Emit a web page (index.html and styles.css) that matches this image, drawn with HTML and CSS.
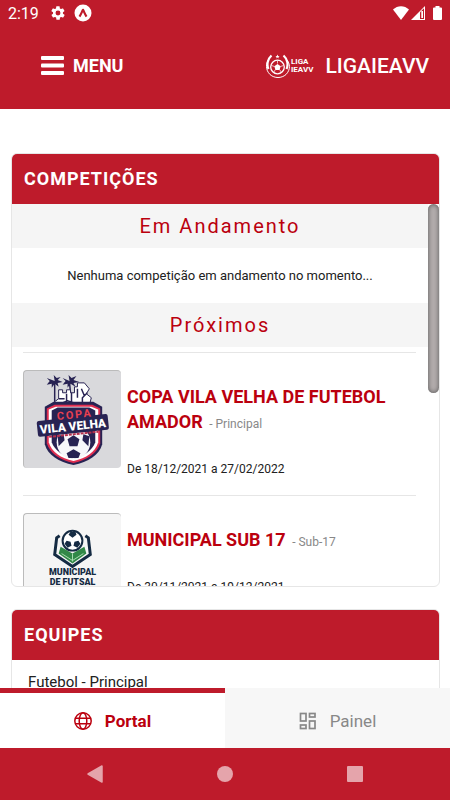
FILE: index.html
```html
<!DOCTYPE html>
<html lang="pt-BR">
<head>
  <meta charset="UTF-8">
  <meta name="viewport" content="width=device-width, initial-scale=1.0">
  <title>LIGAIEAVV</title>
  <link rel="stylesheet" href="styles.css">
</head>
<body>
  <header class="top">
    <div class="status-bar">
      <span class="clock">2:19</span>
      <svg class="status-gear" viewBox="0 0 24 24" width="16" height="16" fill="currentColor" aria-hidden="true">
        <path fill-rule="evenodd" d="M19.4 13a7.500 7.500 0 0 0 0-2l2.100-1.600a.5.5 0 0 0 .1-.7l-2-3.400a.5.5 0 0 0-.6-.2l-2.500 1a7 7 0 0 0-1.700-1l-.4-2.700a.5.5 0 0 0-.5-.4h-4a.5.5 0 0 0-.5.400l-.4 2.700a7 7 0 0 0-1.700 1l-2.500-1a.5.5 0 0 0-.6.2l-2 3.400a.5.5 0 0 0 .1.7L4.600 11a7.500 7.500 0 0 0 0 2l-2.100 1.600a.5.5 0 0 0-.1.700l2 3.400c.1.200.4.300.6.200l2.500-1a7 7 0 0 0 1.700 1l.4 2.700c0 .2.200.4.500.4h4c.3 0 .5-.2.500-.4l.4-2.700a7 7 0 0 0 1.700-1l2.500 1c.2.100.5 0 .6-.2l2-3.400a.5.500 0 0 0-.1-.7zM12 8.300a3.700 3.700 0 1 0 0 7.400 3.700 3.700 0 0 0 0-7.400z"/>
      </svg>
      <svg viewBox="0 0 18 18" width="18" height="18" aria-hidden="true">
        <circle cx="9" cy="9" r="8.500" fill="#fff"/>
        <path d="M5.500 12.600C7 10.400 7.800 8 9 5.800c1.200 2.200 2 4.600 3.500 6.800" fill="none" stroke="#be1b2b" stroke-width="2.200" stroke-linejoin="round"/>
      </svg>
      <div class="status-right">
        <svg viewBox="0 0 16 14" width="16" height="14" fill="#fff" aria-hidden="true"><path d="M0 3.500C4.500-1 11.500-1 16 3.500L8 14z"/></svg>
        <svg viewBox="0 0 14 14" width="14" height="14" aria-hidden="true">
          <path d="M14 0v14H0z" fill="#fff"/>
          <path d="M9 6.300l4-4V13H9z" fill="#be1b2b"/>
          <path d="M10.300 5h1.700v7h-1.700z" fill="#fff"/>
        </svg>
        <svg class="battery" viewBox="0 0 9 14" width="9" height="14" fill="#fff" aria-hidden="true"><path d="M2.500 0h4v1.500H8a1 1 0 0 1 1 1V13a1 1 0 0 1-1 1H1a1 1 0 0 1-1-1V2.500a1 1 0 0 1 1-1h1.500z"/></svg>
      </div>
    </div>
    <div class="navbar">
      <button class="menu-button" type="button">
        <svg viewBox="0 0 23 19" width="23" height="19" fill="#fff" aria-hidden="true">
          <rect width="23" height="4" rx="1"/><rect y="7.500" width="23" height="4" rx="1"/><rect y="15" width="23" height="4" rx="1"/>
        </svg>
        MENU
      </button>
      <a class="brand" href="#">
        <svg viewBox="0 0 50 26" width="50" height="26" aria-hidden="true">
          <g fill="none" stroke="#fff">
            <path d="M4 5C-1 10-.5 17 4 21.500c4.500 4 11.500 4 16 0C24.500 17 25 10 19 5" stroke-width="1"/>
            <path d="M5.500 2.500C1.500 6 .5 12 2.500 16M17.500 2.500C21.500 6 22.500 12 20.500 16" stroke-width="2.200"/>
            <circle cx="11.500" cy="14" r="6.800" stroke-width="1.300"/>
            <path d="M11.500 7.500v3M17.500 12.500l-3 1M15.500 19.500l-2-3M7.500 19.500l2-3M5.500 12.500l3 1" stroke-width=".7"/>
          </g>
          <path d="M11.500 11l3.200 2.300-1.200 3.700h-4l-1.200-3.700zM11.500 1.500l.6 1.400 1.500.1-1.200 1 .4 1.400-1.300-.8-1.300.8.4-1.400-1.200-1 1.500-.1z" fill="#fff"/>
          <text class="brand-text" x="25" y="11">LIGA</text>
          <text class="brand-text" x="25" y="19">IEAVV</text>
        </svg>
        <span>LIGAIEAVV</span>
      </a>
    </div>
  </header>

  <main class="content">
    <section class="card">
      <h2 class="card-title">COMPETIÇÕES</h2>
      <div class="scroll-panel">
        <h3 class="group-title">Em Andamento</h3>
        <p class="empty">Nenhuma competição em andamento no momento...</p>
        <h3 class="group-title">Próximos</h3>
        <div class="competitions">
          <article class="competition">
            <svg class="thumb thumb-copa" viewBox="0 0 98 98" width="98" height="98" role="img" aria-label="Copa Vila Velha">
              <path d="M31 12v22M46 12l1 10" stroke="#282353" stroke-width="1.500" fill="none"/>
              <g fill="#282353">
                <path d="M31 10l-1-6 3 3 4-1-3 3 5 2-5 1 1 4-4-3-3 4v-4l-5 1 3-4-3-3z"/>
                <path d="M46 10l-1-6 3 3 5-2-3 4 6 2-6 1 2 4-5-3-3 4v-4l-5 1 3-4-3-3z"/>
              </g>
              <path d="M27 34l8-6v-9h4v3h4v-3h4v3h4v-6h3v-4h7l5 6-3 5 5 4-2 8H27z" fill="#fff" stroke="#282353"/>
              <path d="M35 28h6M43 23v7M48 22v9M54 18v9M58 18l3 7M64 22l-5 5v6M37 33l7-3 9 3" fill="none" stroke="#282353" stroke-width="1.500"/>
              <path d="M21 36l9-5h40l9 5v38c-3 11-14 18-29 21-15-3-26-10-29-21z" fill="#282353"/>
              <path d="M23 38l8-4h38l8 4v35c-3 10-13 17-27 20-14-3-24-10-27-20z" fill="#e02e50"/>
              <path d="M25 39l7-3h36l7 3v33c-3 10-12 16-25 19-13-3-22-9-25-19z" fill="#fff"/>
              <path d="M28 40l6-3h32l6 3v32c-3 8-11 14-22 17-11-3-19-9-22-17z" fill="#282353"/>
              <circle cx="50" cy="72" r="17" fill="#f7f7fa"/>
              <path d="M50 65l6 4-2 7h-8l-2-7zM34 66l6-2 1 6-6 6zM66 66l-6-2-1 6 6 6zM43 83l7-4 7 4-2 5H45z" fill="#282353"/>
              <g transform="rotate(-6 49 52)">
                <rect x="13" y="47" width="72" height="16" rx="2" fill="#282353"/>
                <path d="M24 64h50" stroke="#b7304d" stroke-width="2" stroke-dasharray="3 1"/>
                <text class="copa-small" x="52" y="48">COPA</text>
                <text class="copa-big" x="49" y="60">VILA VELHA</text>
              </g>
            </svg>
            <div class="competition-info">
              <h4><a href="#">COPA VILA VELHA DE FUTEBOL AMADOR</a> <small>- Principal</small></h4>
              <p>De 18/12/2021 a 27/02/2022</p>
            </div>
          </article>
          <article class="competition">
            <svg class="thumb thumb-municipal" viewBox="0 0 98 98" width="98" height="98" role="img" aria-label="Municipal de Futsal">
              <path d="M36 22l-3 2-2 17 18 12 18-12-2-17-3-2" fill="none" stroke="#152b43" stroke-width="3"/>
              <path d="M37 33l12 7 12-7 2 7-14 10-14-10z" fill="#318847"/>
              <path d="M38 40l11 7 11-7M49 40v8" fill="none" stroke="#a8ddb0"/>
              <circle cx="49" cy="27" r="10" fill="#fff" stroke="#152b43" stroke-width="2"/>
              <path d="M47 18h5l1 3-4 3-4-3zM43 27l4 1 1 4-4 2-3-4zM55 27l-4 1-1 4 4 2 3-4z" fill="#152b43"/>
              <text class="municipal-text" x="49" y="62">MUNICIPAL</text>
              <text class="municipal-text" x="49" y="72">DE FUTSAL</text>
            </svg>
            <div class="competition-info">
              <h4><a href="#">MUNICIPAL SUB 17</a> <small>- Sub-17</small></h4>
              <p>De 30/11/2021 a 19/12/2021</p>
            </div>
          </article>
        </div>
        <div class="scroll-thumb"></div>
      </div>
    </section>

    <section class="card">
      <h2 class="card-title">EQUIPES</h2>
      <a class="team" href="#">Futebol - Principal</a>
    </section>
  </main>

  <nav class="tabs">
    <a class="tab active" href="#">
      <svg viewBox="0 0 18 18" width="18" height="18" fill="none" stroke="currentColor" stroke-width="1.500" aria-hidden="true">
        <circle cx="9" cy="9" r="8.200"/><ellipse cx="9" cy="9" rx="3.800" ry="8.200"/><path d="M1.500 6.200h15M1.500 11.800h15"/>
      </svg>
      Portal
    </a>
    <a class="tab" href="#">
      <svg viewBox="0 0 18 18" width="18" height="18" fill="none" stroke="currentColor" stroke-width="1.700" aria-hidden="true">
        <rect x="1.500" y="1.500" width="5.500" height="7.500"/><rect x="10.500" y="1.500" width="5.500" height="3.500"/>
        <rect x="1.500" y="13" width="5.500" height="3.500"/><rect x="10.500" y="9" width="5.500" height="7.500"/>
      </svg>
      Painel
    </a>
  </nav>

  <div class="system-nav">
    <button type="button" aria-label="Voltar"><svg viewBox="0 0 18 18" width="18" height="18"><path d="M16 1v16L2 9z" stroke="currentColor" stroke-width="1.500" stroke-linejoin="round"/></svg></button>
    <button type="button" aria-label="Início"><svg viewBox="0 0 18 18" width="18" height="18"><circle cx="9" cy="9" r="8"/></svg></button>
    <button type="button" aria-label="Recentes"><svg viewBox="0 0 18 18" width="18" height="18"><rect x="1" y="1" width="16" height="16" rx="1"/></svg></button>
  </div>
</body>
</html>
```
FILE: styles.css
```css
:root {
  --primary: #be1b2b;
  --link: #bb000e;
  --band: #f5f5f5;
  --line: #e6e6e6;
}

* {
  box-sizing: border-box;
}

body {
  margin: 0;
  height: 100vh;
  display: flex;
  flex-direction: column;
  background: white;
  color: #212121;
  font-family: Roboto, sans-serif;
}

h2, h3, h4, p {
  margin: 0;
}

a {
  color: inherit;
  text-decoration: none;
}

button {
  padding: 0;
  border: none;
  background: none;
  color: inherit;
  font-family: inherit;
  cursor: pointer;
}

svg {
  flex-shrink: 0;
}

/* Header */
.top {
  background: var(--primary);
  color: white;
  padding-bottom: 24px;
}

.status-bar {
  display: flex;
  align-items: center;
  height: 26px;
  padding: 0 8px;
}

.clock {
  font-size: 16px;
}

.status-gear {
  margin: 0 8px 0 11px;
}

.status-right {
  display: flex;
  margin-left: auto;
  gap: 2px;
}

.battery {
  margin-left: 6px;
}

.navbar {
  display: flex;
  align-items: center;
  justify-content: space-between;
  height: 59px;
  padding: 20px 21px 0 41px;
}

.menu-button {
  display: flex;
  align-items: center;
  gap: 9px;
  font-size: 18px;
  font-weight: 700;
}

.brand {
  display: flex;
  align-items: center;
  gap: 9px;
  font-size: 21px;
  font-weight: 500;
}

.brand-text {
  fill: white;
  font-size: 8px;
  font-weight: 700;
}

/* Cards */
.content {
  flex: 1;
  min-height: 0;
  overflow: hidden;
  padding: 44px 10px 0 11px;
}

.card {
  border: 1px solid var(--line);
  border-radius: 6px;
  margin-bottom: 22px;
  overflow: hidden;
}

.card-title {
  margin: -1px -1px 0;
  padding-left: 13px;
  background: var(--primary);
  color: white;
  font-size: 18px;
  line-height: 51px;
  letter-spacing: 1px;
}

.scroll-panel {
  position: relative;
  height: 382px;
  padding-right: 11px;
  overflow: hidden;
}

.scroll-thumb {
  position: absolute;
  top: 0;
  right: 0;
  width: 11px;
  height: 189px;
  border-radius: 6px;
  background: #b3adad;
  box-shadow: inset 0 0 5px #555;
}

.group-title {
  background: var(--band);
  color: var(--link);
  font-size: 20px;
  font-weight: 400;
  line-height: 44px;
  letter-spacing: 2px;
  text-align: center;
}

.empty {
  font-size: 13px;
  line-height: 55px;
  text-align: center;
}

.competitions {
  padding: 5px 12px 0 11px;
}

.competition {
  display: flex;
  gap: 6px;
  padding: 17px 0 16px;
  border-top: 1px solid var(--line);
}

.thumb {
  border-radius: 4px;
  border-top: 1px solid #bbb;
  border-left: 1px solid #bbb;
}

.thumb-copa {
  background: #d9d9dc;
}

.thumb-municipal {
  background: #f5f5f5;
}

.copa-small {
  fill: #e84050;
  font: 700 11px Roboto, sans-serif;
  letter-spacing: 2px;
  text-anchor: middle;
}

.copa-big {
  fill: white;
  font: 900 12px Roboto, sans-serif;
  text-anchor: middle;
}

.municipal-text {
  fill: #152b43;
  font: 900 9px Roboto, sans-serif;
  text-anchor: middle;
}

.competition-info {
  padding-top: 14px;
}

.competition h4 {
  color: var(--link);
  font-size: 18px;
  font-weight: 700;
  line-height: 25px;
}

.competition small {
  margin-left: 2px;
  color: #888;
  font-size: 12px;
  font-weight: 400;
}

.competition p {
  margin-top: 22px;
  font-size: 12px;
  line-height: 20px;
}

.team {
  display: block;
  padding-left: 16px;
  font-size: 15px;
  line-height: 44px;
}

/* Bottom tabs */
.tabs {
  display: flex;
  height: 60px;
}

.tab {
  flex: 1;
  display: flex;
  align-items: center;
  justify-content: center;
  gap: 13px;
  padding-top: 5px;
  background: #f7f7f7;
  color: #888;
  font-size: 17px;
}

.tab.active {
  border-top: 5px solid var(--primary);
  padding-top: 0;
  background: white;
  color: var(--link);
  font-weight: 700;
}

.system-nav {
  display: flex;
  justify-content: center;
  gap: 112px;
  height: 52px;
  background: var(--primary);
  color: #e5a4ab;
}

.system-nav svg {
  display: block;
  fill: currentColor;
}
```
